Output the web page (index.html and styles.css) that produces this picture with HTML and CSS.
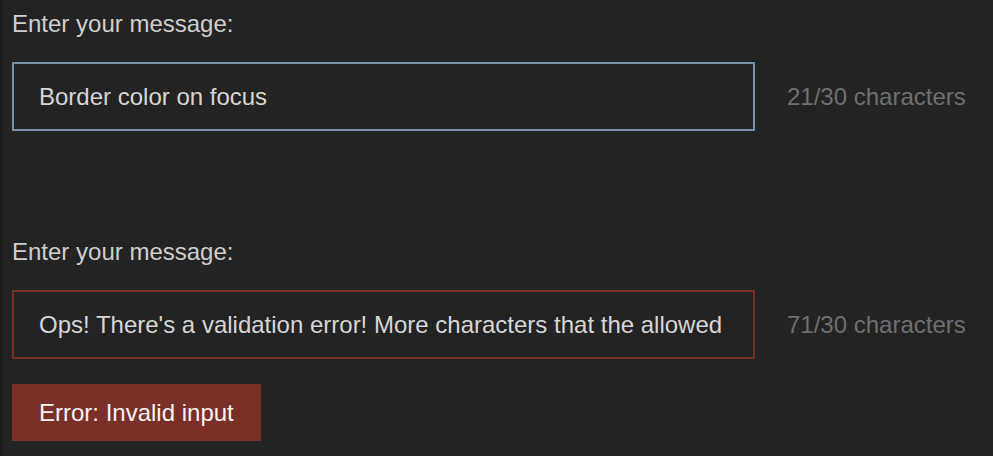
FILE: index.html
```html
<!DOCTYPE html>
<html lang="en">
<head>
<meta charset="utf-8">
<title>Character counter</title>
<link rel="stylesheet" href="styles.css">
</head>
<body>
  <main class="page">
    <section class="field field-spaced">
      <label class="label" for="msg1">Enter your message:</label>
      <div class="row">
        <div class="input input-focus" id="msg1">Border color on focus</div>
        <span class="count">21/30 characters</span>
      </div>
    </section>
    <section class="field">
      <label class="label" for="msg2">Enter your message:</label>
      <div class="row">
        <div class="input input-error" id="msg2">Ops! There's a validation error! More characters that the allowed</div>
        <span class="count">71/30 characters</span>
      </div>
      <div class="error">Error: Invalid input</div>
    </section>
  </main>
</body>
</html>
```

FILE: styles.css
```css
html, body {
  margin: 0;
  padding: 0;
  background: #232323;
}
body {
  font-family: "Liberation Sans", Arial, sans-serif;
  font-size: 24px;
  border-left: 3px solid #1d1d1d;
  min-height: 456px;
  box-sizing: border-box;
}
.page {
  padding: 10px 9px;
  display: flex;
  flex-direction: column;
  gap: 25px;
}
.field {
  display: flex;
  flex-direction: column;
  align-items: flex-start;
  gap: 24px;
}
.field-spaced {
  margin-bottom: 82px;
}
.label {
  color: #cfcfcf;
  line-height: 28px;
}
.row {
  display: flex;
  align-items: center;
  gap: 32px;
}
.input {
  box-sizing: border-box;
  width: 743px;
  height: 69px;
  padding: 0 25px;
  display: flex;
  align-items: center;
  color: #d6d6d6;
  background: #232323;
  white-space: nowrap;
  overflow: hidden;
}
.input-focus {
  border: 2px solid #7b90ab;
}
.input-error {
  border: 2px solid #7a2e28;
}
.count {
  color: #6f6f6f;
}
.error {
  margin-top: 1px;
  background: #7b2f29;
  color: #f4f4f4;
  padding: 0 27px;
  height: 57px;
  display: flex;
  align-items: center;
}
```
